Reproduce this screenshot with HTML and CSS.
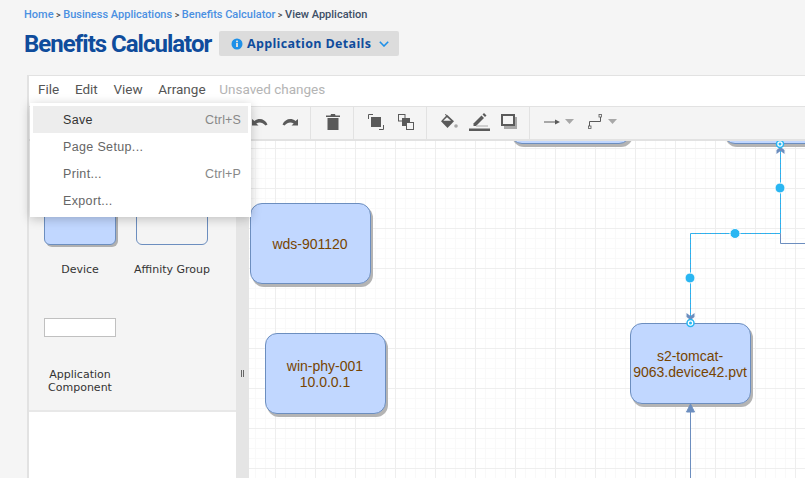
FILE: index.html
```html
<!DOCTYPE html>
<html lang="en">
<head>
<meta charset="utf-8">
<title>Benefits Calculator</title>
<link rel="stylesheet" href="styles.css">
</head>
<body>
<nav class="crumbs"><a>Home</a><i>&gt;</i><a>Business Applications</a><i>&gt;</i><a>Benefits Calculator</a><i>&gt;</i><b>View Application</b></nav>
<header class="title-row">
  <h1>Benefits Calculator</h1>
  <button class="details">
    <svg class="info" viewBox="0 0 12 12" width="12" height="12"><circle cx="6" cy="6" r="5.500" fill="#1e90e8"/><rect x="5" y="5" width="2" height="4" fill="#dcdcdc"/><rect x="5" y="2.600" width="2" height="1.600" fill="#dcdcdc"/></svg>
    <span>Application Details</span>
    <svg class="chev" viewBox="0 0 10 6" width="10" height="6"><path d="M.8.8 5 5l4.200-4.200" fill="none" stroke="#1e90e8" stroke-width="1.600"/></svg>
  </button>
</header>
<main class="editor">
  <div class="menubar">
    <span>File</span><span>Edit</span><span>View</span><span>Arrange</span><span class="unsaved">Unsaved changes</span>
  </div>
  <div class="toolbar">
    <div class="tgroup g-hist">
      <svg viewBox="0 0 16 9" width="16" height="9"><path d="M0 2v6.500h6.500L4.300 6.500C7 4.800 10.500 5 13.500 8.500L15.500 7.500C13 2 7 .5 2.500 4Z" fill="#5a5a5a"/></svg>
      <svg viewBox="0 0 16 9" width="16" height="9"><path d="M16 2v6.500H9.500L11.700 6.500C9 4.800 5.500 5 2.500 8.500L.5 7.500C3 2 9 .5 13.500 4Z" fill="#5a5a5a"/></svg>
    </div>
    <div class="tgroup g-del">
      <svg viewBox="0 0 14 16" width="14" height="16"><path d="M0 1.500h4.500L5 0h4l.5 1.500H14V3H0ZM1.500 4h11v12h-11Z" fill="#5a5a5a"/></svg>
    </div>
    <div class="tgroup g-order">
      <svg viewBox="0 0 16 16" width="16" height="16"><path d="M.5 5V.5H5M15.500 11v4.500H11" fill="none" stroke="#5a5a5a"/><rect x="3" y="3" width="10" height="10" fill="#5a5a5a"/></svg>
      <svg viewBox="0 0 16 16" width="16" height="16"><rect x=".5" y=".5" width="6.500" height="6.500" fill="#f4f4f4" stroke="#5a5a5a"/><rect x="4" y="4" width="8" height="8" fill="#5a5a5a"/><rect x="8.500" y="8.500" width="7" height="7" fill="#f4f4f4" stroke="#5a5a5a"/></svg>
    </div>
    <div class="tgroup g-style">
      <svg viewBox="0 0 17 15" width="17" height="15"><path d="M4.500 0 7 5" stroke="#5a5a5a" fill="none"/><path d="M6 .8 13 7.200 6.500 14 0 7.200Z" fill="#5a5a5a"/><path d="M6 3.200 10 6.800H2.300Z" fill="#f4f4f4"/><circle cx="15" cy="12" r="1.800" fill="#a8a8a8"/></svg>
      <svg viewBox="0 0 21 18" width="21" height="18"><path d="M4.500 10.500 12.500 2.500 15 5 7 13H4.500Z" fill="#5a5a5a"/><path d="M13.500 1.500 15 0l2.500 2.500L16 4Z" fill="#5a5a5a"/><rect x="7" y="12.500" width="12" height="1" fill="#a8a8a8"/><rect y="15.500" width="21" height="2.500" fill="#5a5a5a"/></svg>
      <svg viewBox="0 0 16 15" width="16" height="15"><rect x="3" y="3" width="13" height="12" fill="#a8a8a8"/><rect x="1" y="1" width="12" height="10" fill="#f4f4f4" stroke="#5a5a5a" stroke-width="2"/></svg>
    </div>
    <div class="tgroup g-conn">
      <span class="pick">
        <svg viewBox="0 0 16 8" width="16" height="8"><path d="M0 4h12" stroke="#5a5a5a"/><path d="M11 1.500 16 4l-5 2.500Z" fill="#5a5a5a"/></svg>
        <svg class="caret" viewBox="0 0 9 5" width="9" height="5"><path d="M0 0h9L4.500 5Z" fill="#a8a8a8"/></svg>
      </span>
      <span class="pick">
        <svg viewBox="0 0 15 15" width="15" height="15"><path d="M1.500 12.500V7.500H12.500V2.500" fill="none" stroke="#5a5a5a"/><rect x=".5" y="12" width="2.500" height="2.500" fill="#f4f4f4" stroke="#5a5a5a" stroke-width=".8"/><rect x="11" y=".5" width="2.500" height="2.500" fill="#f4f4f4" stroke="#5a5a5a" stroke-width=".8"/></svg>
        <svg class="caret" viewBox="0 0 9 5" width="9" height="5"><path d="M0 0h9L4.500 5Z" fill="#a8a8a8"/></svg>
      </span>
    </div>
  </div>
  <div class="workspace">
    <aside class="sidebar">
      <div class="palette">
        <div class="tile"><div class="shape device"></div><p>Device</p></div>
        <div class="tile"><div class="shape affinity"></div><p>Affinity Group</p></div>
        <div class="tile"><div class="shape component"></div><p>Application<br>Component</p></div>
      </div>
    </aside>
    <div class="splitter"><span></span></div>
    <section class="canvas">
      <div class="node n-top1"></div>
      <div class="node n-top2"></div>
      <div class="node n-wds">wds-901120</div>
      <div class="node n-win">win-phy-001<br>10.0.0.1</div>
      <div class="node n-s2">s2-tomcat-<br>9063.device42.pvt</div>
      <svg class="edges" viewBox="0 0 556 337" width="556" height="337">
        <path d="M531.500 92.500V102.500H556" fill="none" stroke="#6c8ebf"/>
        <path d="M441.500 264V337" fill="none" stroke="#6c8ebf"/>
        <path d="M441.500 263 L437.500 271 445.500 271Z" fill="#6c8ebf" stroke="#6c8ebf"/>
        <path d="M531.500 8V92.500H441.500V176" fill="none" stroke="#6c8ebf"/>
        <path d="M531.500 8V92.500H441.500V176" fill="none" stroke="#29b6f2" stroke-dasharray="4 1"/>
        <path d="M527.500 9 531.500 6 535.500 9 535.500 13 531.500 10 527.500 13Z" fill="#6c8ebf"/>
        <path d="M437.500 173 441.500 176 445.500 173 445.500 177 441.500 180 437.500 177Z" fill="#6c8ebf" transform="translate(0 -1)"/>
        <g fill="#29b6f2" stroke="#fff" stroke-width="1">
          <circle cx="531" cy="47" r="5"/>
          <circle cx="486" cy="92.500" r="5"/>
          <circle cx="441" cy="137" r="5"/>
        </g>
        <g fill="#fff" stroke="#29b6f2" stroke-width="1.500">
          <circle cx="531" cy="3" r="3.500"/>
          <circle cx="441.500" cy="182" r="3.500"/>
        </g>
        <g fill="#29b6f2">
          <circle cx="531" cy="3" r="1.500"/>
          <circle cx="441.500" cy="182" r="1.500"/>
        </g>
      </svg>
    </section>
  </div>
  <div class="dropdown">
    <div class="mitem active"><span>Save</span><kbd>Ctrl+S</kbd></div>
    <div class="mitem"><span>Page Setup...</span></div>
    <div class="mitem"><span>Print...</span><kbd>Ctrl+P</kbd></div>
    <div class="mitem"><span>Export...</span></div>
  </div>
</main>
</body>
</html>
```
FILE: styles.css
```css
html, body { margin: 0; height: 100%; overflow: hidden; }
body { background: #f5f5f5; width: 805px; height: 478px; font-family: "Liberation Sans", Arial, sans-serif; }
.crumbs { display: flex; gap: 2.500px; align-items: center; height: 12px; padding: 9px 0 0 24px; font: 500 11px/12px Roboto, sans-serif; color: #4a90e2; }
.crumbs i { font-style: normal; font-size: 9px; color: #444; }
.crumbs b { font-weight: 500; color: #3d4f66; }
.title-row { display: flex; align-items: center; gap: 7px; margin-top: 10px; padding-left: 24px; height: 25px; }
h1 { margin: 0; padding-top: 2px; font: 700 24px/25px Roboto, sans-serif; letter-spacing: -1px; color: #0f4c9c; width: 188px; white-space: nowrap; }
.details { display: flex; align-items: center; width: 180px; height: 25px; padding: 0 0 0 12px; border: 0; border-radius: 2px; background: #dcdcdc; font: 700 12.500px/25px "Open Sans", sans-serif; color: #0f4c9c; letter-spacing: .33px; }
.details span { margin-left: 4px; white-space: nowrap; }
.details .chev { margin-left: 8px; }
.editor { position: relative; margin: 19px 0 0 27px; width: 800px; height: 403px; background: #fff; border-top: 1px solid #e2e2e2; border-left: 2px solid #e2e2e2; }
.menubar { display: flex; align-items: center; gap: 15.700px; box-sizing: border-box; height: 30px; padding: 0 0 3px 9px; font: 400 13.500px/27px Roboto, sans-serif; color: #555; }
.menubar .unsaved { color: #b4b4b4; margin-left: -2px; }
.toolbar { display: flex; box-sizing: border-box; height: 35px; background: #f4f4f4; border-top: 1px solid #e2e2e2; border-bottom: 2px solid #e2e2e2; padding-left: 223px; }
.tgroup { display: flex; align-items: center; height: 100%; box-sizing: border-box; padding-bottom: 3px; border-left: 1px solid #e2e2e2; }
.tgroup:first-child { border-left: 0; }
.g-hist { width: 58px; gap: 14px; }
.g-del { width: 43px; padding-left: 15px; }
.g-order { width: 73px; padding-left: 14px; gap: 14px; }
.g-style { width: 103px; padding-left: 14px; gap: 11px; }
.g-conn { padding-left: 14px; gap: 14px; }
.pick { display: flex; align-items: center; gap: 5px; }
.workspace { display: flex; height: 338px; }
.sidebar { width: 207px; background: #fff; }
.palette { height: 271px; box-sizing: border-box; background: #f4f4f4; border-bottom: 2px solid #e8e8e8; display: grid; grid-template-columns: 92px 92px; grid-auto-rows: 120px; padding: 0 0 0 5px; }
.tile { position: relative; height: 120px; }
.tile p { margin: 0; position: absolute; left: 0; width: 92px; font: 11px/13px "DejaVu Sans", sans-serif; text-align: center; color: #333; top: 122px; }
.shape { position: absolute; box-sizing: border-box; }
.device { left: 10px; top: 0; width: 72px; height: 104px; background: #c1d7ff; border: 1px solid #6c8ebf; border-radius: 0 0 6px 6px; box-shadow: 2px 2px 0 #b0b0b0; }
.affinity { left: 10px; top: 0; width: 72px; height: 104px; border: 1px solid #6c8ebf; border-radius: 0 0 6px 6px; }
.component { left: 10px; top: 57px; width: 72px; height: 19px; background: #fff; border: 1px solid #c0c0c0; }
.tile:nth-child(3) p { top: 107px; }
.splitter { position: relative; width: 13px; background: #e5e5e5; }
.splitter span { position: absolute; left: 5px; top: 229px; width: 1px; height: 7px; border-left: 1px solid #666; border-right: 1px solid #666; }
.canvas { position: relative; flex: 1; overflow: hidden; background-color: #fff;
  background-image:
    linear-gradient(to right, #eeeeee 1px, transparent 1px),
    linear-gradient(to bottom, #eeeeee 1px, transparent 1px),
    linear-gradient(to right, #f9f9f9 1px, transparent 1px),
    linear-gradient(to bottom, #f9f9f9 1px, transparent 1px);
  background-size: 40px 40px, 40px 40px, 10px 10px, 10px 10px;
  background-position: 26px 7px, 26px 7px, 6px 7px, 6px 7px;
}
.node { position: absolute; box-sizing: border-box; width: 121px; height: 81px; padding-right: 1px; display: flex; align-items: center; justify-content: center; text-align: center; background: #c1d7ff; border: 1px solid #6c8ebf; border-radius: 12px; box-shadow: 2px 3px 0 #b4b4b4; font-size: 14px; line-height: 16px; color: #774400; white-space: nowrap; }
.n-top1 { left: 261px; top: -78px; }
.n-top2 { left: 474px; top: -78px; }
.n-wds { left: 1px; top: 62px; }
.n-win { left: 16px; top: 192px; }
.n-s2 { left: 381px; top: 182px; }
.edges { position: absolute; left: 0; top: 0; }
.dropdown { position: absolute; left: 1px; top: 27px; box-sizing: border-box; width: 221px; height: 114px; padding: 3px; background: #fff; box-shadow: 0 2px 10px rgba(0,0,0,.22); }
.mitem { display: flex; justify-content: space-between; height: 27px; padding: 0 7px 0 30px; font: 12.500px/28px "Liberation Sans", sans-serif; letter-spacing: .35px; color: #666; }
.mitem.active { background: #ededed; }
.mitem.active span { color: #333; }
.mitem kbd { font: inherit; color: #888; letter-spacing: .15px; }
```
